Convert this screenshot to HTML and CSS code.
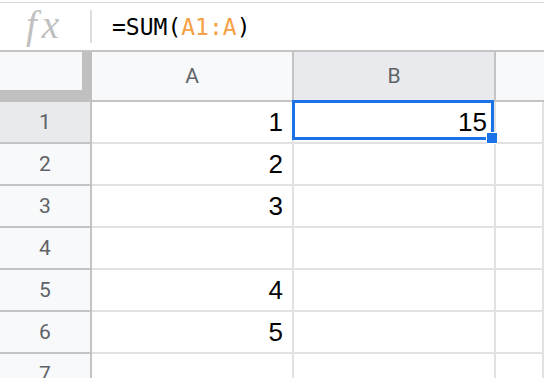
FILE: index.html
```html
<!DOCTYPE html>
<html lang="en">
<head>
    <meta charset="UTF-8">
    <title>Feuille</title>
    <link rel="stylesheet" href="styles.css">
</head>
<body>
    <div class="formula-bar">
        <div class="fx">fx</div>
        <div class="divider"></div>
        <div class="formula">=SUM(<span class="range">A1:A</span>)</div>
    </div>
    <div class="grid">
        <div class="corner"></div>
        <div class="col-head">A</div>
        <div class="col-head active">B</div>
        <div class="col-head last"></div>

        <div class="row-head active">1</div>
        <div class="cell">1</div>
        <div class="cell selected">15<span class="sel-box"></span><span class="handle"></span></div>
        <div class="cell"></div>

        <div class="row-head">2</div>
        <div class="cell">2</div>
        <div class="cell"></div>
        <div class="cell"></div>

        <div class="row-head">3</div>
        <div class="cell">3</div>
        <div class="cell"></div>
        <div class="cell"></div>

        <div class="row-head">4</div>
        <div class="cell"></div>
        <div class="cell"></div>
        <div class="cell"></div>

        <div class="row-head">5</div>
        <div class="cell">4</div>
        <div class="cell"></div>
        <div class="cell"></div>

        <div class="row-head">6</div>
        <div class="cell">5</div>
        <div class="cell"></div>
        <div class="cell"></div>

        <div class="row-head">7</div>
        <div class="cell"></div>
        <div class="cell"></div>
        <div class="cell"></div>
    </div>
</body>
</html>
```

FILE: styles.css
```css
/* Feuille de calcul */
body {
    margin: 0;
    padding-top: 2px;
    background: #fff;
    height: 378px;
    overflow: hidden;
    font-family: 'Liberation Sans', Arial, sans-serif;
}

/* Barre de formule */
.formula-bar {
    display: flex;
    align-items: center;
    height: 47px;
    border-top: 1px solid #dadada;
    border-bottom: 2px solid #c4c4c4;
}

.fx {
    width: 90px;
    text-align: center;
    font-family: 'Liberation Serif', serif;
    font-style: italic;
    font-size: 39px;
    letter-spacing: 5px;
    color: #c0c0c0;
    line-height: 1;
    margin-top: -4px;
}

.divider {
    width: 2px;
    height: 33px;
    background: #dadce0;
}

.formula {
    padding-left: 20px;
    font-family: 'DejaVu Sans Mono', monospace;
    font-size: 23px;
    color: #000;
}

.range {
    color: #f5a045;
}

/* Grille */
.grid {
    display: grid;
    grid-template-columns: 92px 202px 202px 1fr;
    grid-template-rows: 50px repeat(7, 42px);
}

.grid > div {
    box-sizing: border-box;
    display: flex;
    align-items: center;
}

.corner {
    background: #f8f9fa;
    border-right: 10px solid #c0c0c0;
    border-bottom: 12px solid #c0c0c0;
}

.col-head {
    justify-content: center;
    background: #f8f9fa;
    border-right: 2px solid #c4c4c4;
    border-bottom: 2px solid #c4c4c4;
    font-family: Roboto, 'Liberation Sans', sans-serif;
    font-size: 21px;
    color: #5f6368;
}

.col-head.last {
    border-right: none;
}

.row-head {
    justify-content: center;
    background: #f8f9fa;
    border-right: 2px solid #c4c4c4;
    border-bottom: 2px solid #c4c4c4;
    font-family: Roboto, 'Liberation Sans', sans-serif;
    font-size: 21px;
    color: #5f6368;
}

.col-head.active,
.row-head.active {
    background: #e8eaed;
}

.cell {
    justify-content: flex-end;
    padding-right: 9px;
    border-right: 2px solid #e2e2e2;
    border-bottom: 2px solid #e2e2e2;
    font-size: 26px;
    color: #000;
}

.cell.selected {
    position: relative;
    padding-right: 7px;
}

.sel-box {
    position: absolute;
    top: -2px;
    left: -2px;
    right: 0;
    bottom: 2px;
    border: 3px solid #1a73e8;
}

.handle {
    position: absolute;
    right: -4px;
    bottom: -2px;
    width: 10px;
    height: 10px;
    background: #1a73e8;
    border: 1px solid #fff;
}
```
